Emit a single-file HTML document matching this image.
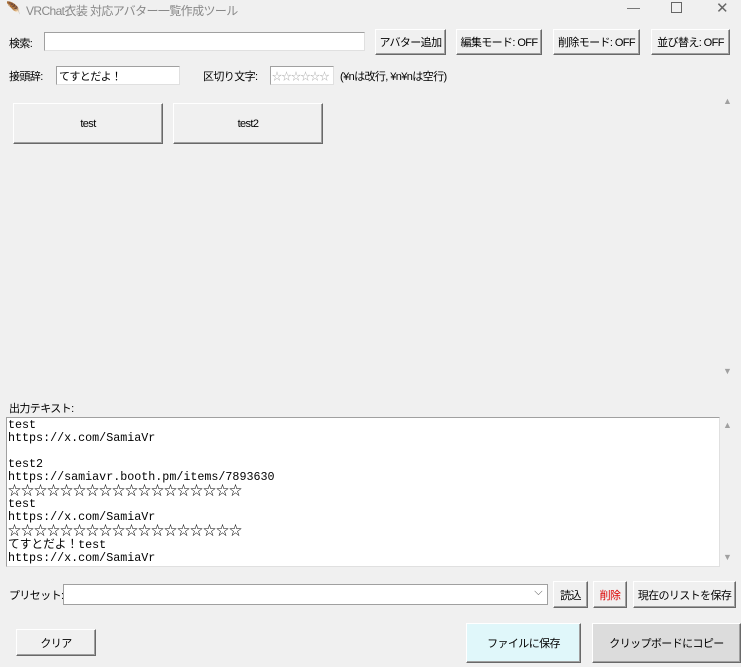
<!DOCTYPE html>
<html><head><meta charset="utf-8"><style>
*{box-sizing:border-box;margin:0;padding:0}
body{width:741px;height:667px;background:#f0f0f0;position:relative;overflow:hidden;font-family:"Liberation Sans","Noto Sans CJK JP",sans-serif;font-size:11px;letter-spacing:-0.6px;color:#000}
.a{position:absolute;white-space:nowrap}
.ent{position:absolute;background:#fff;border:1px solid #a0a0a0;border-bottom-color:#e0e0e0;border-right-color:#e0e0e0}
.btn{position:absolute;white-space:nowrap;background:#f0f0f0;border:1px solid #fff;border-right-color:#696969;border-bottom-color:#696969;box-shadow:inset -1px -1px 0 #a0a0a0;display:flex;align-items:center;justify-content:center;font-size:11px}
.mono{font-family:"Liberation Mono","Noto Sans CJK JP",monospace;font-size:11.7px;line-height:12.9px;letter-spacing:0}
.st{font-family:"Noto Sans CJK JP",sans-serif;font-size:13px;letter-spacing:0}
</style></head><body>
<div class="a" style="left:6px;top:1px;font-size:12px;color:#556">&#x1FAB6;</div>
<div class="a" style="left:26px;top:2px;color:#888;font-size:12px">VRChat衣装 対応アバター一覧作成ツール</div>
<div class="a" style="left:627px;top:0px;color:#666;font-size:13px">—</div>
<div class="a" style="left:671px;top:2px;width:11px;height:11px;border:1px solid #666"></div>
<div class="a" style="left:716px;top:-1px;color:#666;font-size:15px">✕</div>

<div class="a" style="left:9px;top:35px">検索:</div>
<div class="ent" style="left:44px;top:32px;width:321px;height:19px"></div>
<div class="btn" style="left:375px;top:29px;width:71px;height:26px">アバター追加</div>
<div class="btn" style="left:456px;top:29px;width:86px;height:26px">編集モード: OFF</div>
<div class="btn" style="left:553px;top:29px;width:87px;height:26px">削除モード: OFF</div>
<div class="btn" style="left:651px;top:29px;width:79px;height:26px">並び替え: OFF</div>

<div class="a" style="left:9px;top:68px">接頭辞:</div>
<div class="ent" style="left:56px;top:66px;width:124px;height:19px"><span style="position:absolute;left:2px;top:1px">てすとだよ！</span></div>
<div class="a" style="left:203px;top:68px">区切り文字:</div>
<div class="ent" style="left:270px;top:66px;width:64px;height:19px;overflow:hidden"><span style="position:absolute;left:1px;top:1px;color:#aaa;font-size:10px;letter-spacing:-0.5px">☆☆☆☆☆☆</span></div>
<div class="a" style="left:340px;top:68px">(¥nは改行, ¥n¥nは空行)</div>

<div class="btn" style="left:13px;top:103px;width:150px;height:41px">test</div>
<div class="btn" style="left:173px;top:103px;width:150px;height:41px">test2</div>
<div class="a" style="left:723px;top:96px;color:#a0a0a0;font-size:9px">▲</div>
<div class="a" style="left:723px;top:366px;color:#a0a0a0;font-size:9px">▼</div>

<div class="a" style="left:9px;top:400px">出力テキスト:</div>
<div class="ent mono" style="left:6px;top:417px;width:714px;height:150px;padding:1px 0 0 1px;white-space:pre">test
https://x.com/SamiaVr

test2
https://samiavr.booth.pm/items/7893630
<span class="st">☆☆☆☆☆☆☆☆☆☆☆☆☆☆☆☆☆☆</span>
test
https://x.com/SamiaVr
<span class="st">☆☆☆☆☆☆☆☆☆☆☆☆☆☆☆☆☆☆</span>
てすとだよ！test
https://x.com/SamiaVr</div>
<div class="a" style="left:723px;top:420px;color:#a0a0a0;font-size:9px">▲</div>
<div class="a" style="left:723px;top:552px;color:#a0a0a0;font-size:9px">▼</div>

<div class="a" style="left:9px;top:587px">プリセット:</div>
<div class="ent" style="left:63px;top:584px;width:485px;height:21px;border-color:#a0a0a0"><span style="position:absolute;right:5px;top:1px;color:#555;font-size:11px">⌵</span></div>
<div class="btn" style="left:553px;top:581px;width:35px;height:27px">読込</div>
<div class="btn" style="left:593px;top:581px;width:34px;height:27px;color:#d00">削除</div>
<div class="btn" style="left:633px;top:581px;width:103px;height:27px">現在のリストを保存</div>

<div class="btn" style="left:16px;top:629px;width:80px;height:27px">クリア</div>
<div class="btn" style="left:466px;top:623px;width:115px;height:40px;background:#e0f7fa">ファイルに保存</div>
<div class="btn" style="left:592px;top:623px;width:149px;height:40px;background:#dcdcdc">クリップボードにコピー</div>
</body></html>
